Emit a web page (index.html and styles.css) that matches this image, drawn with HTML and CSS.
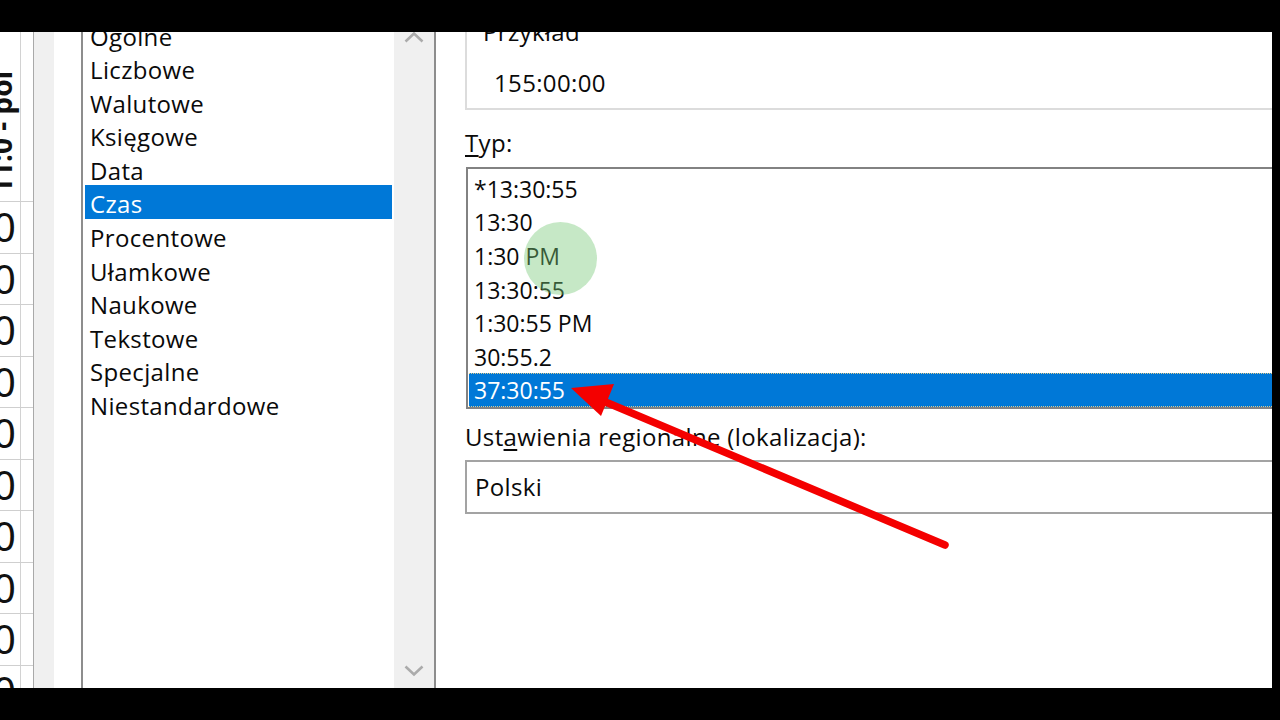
FILE: index.html
```html
<!DOCTYPE html>
<html lang="pl">
<head>
<meta charset="utf-8">
<title>Formatowanie komórek</title>
<link rel="stylesheet" href="styles.css">
</head>
<body>
<div class="screen">
  <div class="viewport">
    <div class="sheet">
      <div class="sheet-row head"><div class="cell a"><span class="rot">11:0 - pol</span></div><div class="cell b"></div></div>
      <div class="sheet-row"><div class="cell a">0</div><div class="cell b"></div></div>
      <div class="sheet-row"><div class="cell a">0</div><div class="cell b"></div></div>
      <div class="sheet-row"><div class="cell a">0</div><div class="cell b"></div></div>
      <div class="sheet-row"><div class="cell a">0</div><div class="cell b"></div></div>
      <div class="sheet-row"><div class="cell a">0</div><div class="cell b"></div></div>
      <div class="sheet-row"><div class="cell a">0</div><div class="cell b"></div></div>
      <div class="sheet-row"><div class="cell a">0</div><div class="cell b"></div></div>
      <div class="sheet-row"><div class="cell a">0</div><div class="cell b"></div></div>
      <div class="sheet-row"><div class="cell a">0</div><div class="cell b"></div></div>
      <div class="sheet-row"><div class="cell a">0</div><div class="cell b"></div></div>
    </div>
    <div class="dialog-edge"></div>
    <div class="dialog">
      <div class="cat-pane">
        <div class="listbox cats">
          <ul class="items">
            <li class="item">Ogólne</li>
            <li class="item">Liczbowe</li>
            <li class="item">Walutowe</li>
            <li class="item">Księgowe</li>
            <li class="item">Data</li>
            <li class="item selected">Czas</li>
            <li class="item">Procentowe</li>
            <li class="item">Ułamkowe</li>
            <li class="item">Naukowe</li>
            <li class="item">Tekstowe</li>
            <li class="item">Specjalne</li>
            <li class="item">Niestandardowe</li>
          </ul>
          <div class="scrollbar">
            <svg class="chev up" width="20" height="12" viewBox="0 0 20 12"><polyline points="1.5,10.5 10,2.5 18.5,10.5" fill="none" stroke="#ababab" stroke-width="2.6"/></svg>
            <svg class="chev down" width="20" height="12" viewBox="0 0 20 12"><polyline points="1.5,1.5 10,9.5 18.5,1.5" fill="none" stroke="#ababab" stroke-width="2.6"/></svg>
          </div>
        </div>
      </div>
      <div class="detail-pane">
        <div class="group">
          <div class="group-label">Przykład</div>
          <div class="sample">155:00:00</div>
        </div>
        <div class="label"><u>T</u>yp:</div>
        <ul class="listbox types">
          <li class="type">*13:30:55</li>
          <li class="type">13:30</li>
          <li class="type">1:30 PM</li>
          <li class="type">13:30:55</li>
          <li class="type">1:30:55 PM</li>
          <li class="type">30:55.2</li>
          <li class="type selected">37:30:55</li>
        </ul>
        <div class="label regional">Ust<u>a</u>wienia regionalne (lokalizacja):</div>
        <div class="combo">Polski</div>
      </div>
    </div>
    <div class="highlight"></div>
    <svg class="arrow" width="1272" height="656" viewBox="0 32 1272 656">
      <line x1="596" y1="398" x2="945" y2="545" stroke="#f40000" stroke-width="7.5" stroke-linecap="round"/>
      <polygon points="571,388 614,384 601,416" fill="#f40000"/>
    </svg>
  </div>
</div>
</body>
</html>
```
FILE: styles.css
```css
* { box-sizing: border-box; }
html, body { margin: 0; padding: 0; }
body {
  background: #000;
  font-family: "Open Sans", "Noto Sans", "DejaVu Sans", sans-serif;
  color: #0a0a0a;
}
.screen {
  width: 1280px;
  height: 720px;
  background: #000;
  padding-top: 32px;
}
.viewport {
  position: relative;
  width: 1272px;
  height: 656px;
  background: #fff;
  display: flex;
  overflow: hidden;
}

/* spreadsheet strip */
.sheet {
  width: 34px;
  flex: none;
  border-right: 1px solid #a9a9a9;
  display: flex;
  flex-direction: column;
}
.sheet-row {
  display: flex;
  height: 51.5px;
  flex: none;
  border-bottom: 1px solid #cfcfcf;
}
.sheet-row.head { height: 170px; }
.cell { height: 100%; }
.cell.a {
  width: 21px;
  border-right: 1px solid #d2d2d2;
  display: flex;
  justify-content: flex-end;
  align-items: center;
  font-family: "Noto Sans", sans-serif;
  font-size: 40px;
  line-height: 1;
  overflow: hidden;
  padding-right: 4px;
  color: #111;
}
.cell.b { width: 12px; }
.head .cell.a {
  align-items: flex-start;
  justify-content: flex-start;
  padding: 0;
}
.rot {
  display: block;
  writing-mode: vertical-rl;
  transform: rotate(180deg);
  font-size: 28px;
  font-weight: bold;
  white-space: nowrap;
  margin-left: -13px;
  height: 162px;
  text-align: left;
}

.dialog-edge {
  width: 20px;
  flex: none;
  background: #f0f0f0;
}
.dialog {
  flex: 1;
  display: flex;
  background: #fff;
  font-size: 24px;
  letter-spacing: 0.35px;
}

/* category list */
.cat-pane {
  padding-left: 27px;
  flex: none;
}
.listbox { margin: 0; padding: 0; list-style: none; }
.cats {
  width: 355px;
  height: 100%;
  display: flex;
  border-left: 2px solid #8d8d8d;
  border-right: 2px solid #8d8d8d;
}
.items {
  flex: 1;
  list-style: none;
  margin: -15px 0 0 0;
  padding: 0 2px;
}
.item {
  height: 33.6px;
  line-height: 33.6px;
  padding-top: 2.5px;
  padding-left: 5px;
  white-space: nowrap;
}
.item.selected {
  background: #0078d7;
  color: #fff;
}
.scrollbar {
  width: 40px;
  flex: none;
  background: #f0f0f0;
  display: flex;
  flex-direction: column;
  align-items: center;
  justify-content: space-between;
  padding: 0 0 11px 0;
}
.chev.up { margin-top: -1px; }

/* detail pane */
.detail-pane {
  flex: 1;
  padding-left: 29px;
  margin-right: -40px;
}
.group {
  margin-top: -14px;
  border: 2px solid #dcdcdc;
  padding-bottom: 8px;
}
.group-label {
  padding-left: 16px;
  line-height: 24px;
}
.sample {
  padding-left: 27px;
  margin-top: 22px;
  line-height: 34px;
}
.label {
  line-height: 34px;
  margin-top: 16px;
}
.label u { text-underline-offset: 3px; }
.types {
  margin-top: 7px;
  margin-left: 1px;
  border: 2px solid #828282;
  padding: 2px 0 0 1px;
  font-size: 23px;
  letter-spacing: 0;
}
.type {
  height: 33.7px;
  line-height: 33.7px;
  padding-top: 1.5px;
  padding-left: 5px;
  white-space: nowrap;
}
.type.selected {
  background: #0078d7;
  color: #fff;
  border-top: 1px dotted #d9c98f;
  border-bottom: 1px dotted #d9c98f;
  padding-top: 0.5px;
  line-height: 31.7px;
}
.label.regional { margin-top: 11px; }
.combo {
  margin-top: 6px;
  height: 54px;
  border: 2px solid #a3a3a3;
  padding-left: 8px;
  line-height: 50px;
}

/* annotations */
.highlight {
  position: absolute;
  left: 524px;
  top: 190px;
  width: 73px;
  height: 73px;
  border-radius: 50%;
  background: rgba(120, 200, 120, 0.42);
}
.arrow {
  position: absolute;
  left: 0;
  top: 0;
}
```
